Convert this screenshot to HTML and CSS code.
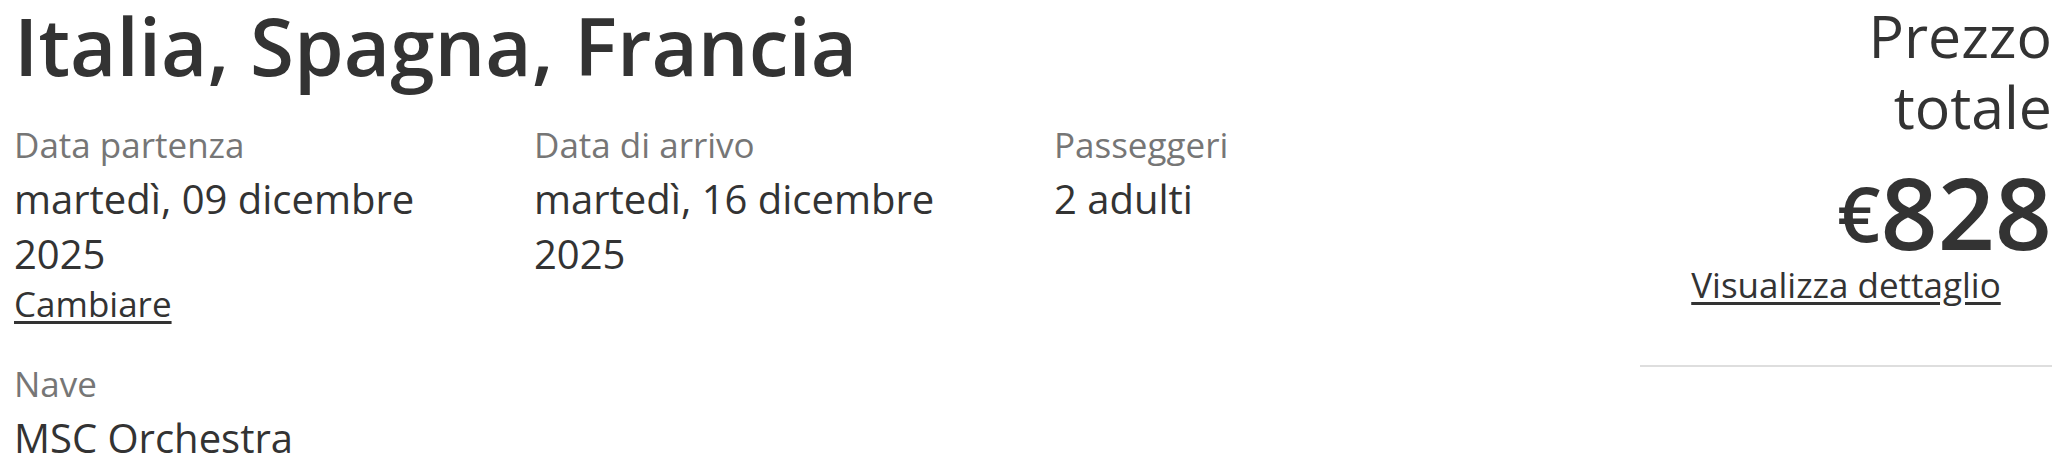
FILE: index.html
```html
<!DOCTYPE html>
<html lang="it">
  <head>
    <meta charset="UTF-8" />
    <meta name="viewport" content="width=device-width, initial-scale=1.0" />
    <title>Riepilogo crociera</title>
    <link rel="stylesheet" href="styles.css">
  </head>
  <body>
    <!-- =========== summary ========= -->
    <div class="cruise-summary">
      <div class="cruise-info">
        <h1>Italia, Spagna, Francia</h1>

        <div class="cruise-details">
          <div class="detail">
            <span class="detail-label">Data partenza</span>
            <span class="detail-value">martedì, 09 dicembre 2025</span>
            <a class="detail-link" href="#">Cambiare</a>
          </div>
          <div class="detail">
            <span class="detail-label">Data di arrivo</span>
            <span class="detail-value">martedì, 16 dicembre 2025</span>
          </div>
          <div class="detail">
            <span class="detail-label">Passeggeri</span>
            <span class="detail-value">2 adulti</span>
          </div>
          <div class="detail">
            <span class="detail-label">Nave</span>
            <span class="detail-value">MSC Orchestra</span>
          </div>
        </div>
      </div>

      <!-- price box -->
      <aside class="price-box">
        <div class="price-title">Prezzo totale</div>
        <div class="price-amount"><span class="currency">€</span>828</div>
        <a class="price-link" href="#">Visualizza dettaglio</a>
        <hr class="price-divider" />
      </aside>
    </div>
  </body>
</html>
```

FILE: styles.css
```css
* {
  margin: 0;
  padding: 0;
  box-sizing: border-box;
}

body {
  background-color: #fff;
  color: #333;
  font-family: "Open Sans", "Liberation Sans", sans-serif;
}

.cruise-summary {
  display: flex;
  gap: 66px;
  padding: 0 14px;
}

.cruise-info {
  flex: 1;
}

h1 {
  font-size: 80px;
  font-weight: 600;
  line-height: 90px;
}

.cruise-details {
  display: grid;
  grid-template-columns: repeat(3, 520px);
  row-gap: 31px;
  margin-top: 29px;
}

.detail {
  display: flex;
  flex-direction: column;
  align-items: flex-start;
}

.detail-label {
  color: #767676;
  font-size: 35px;
  line-height: 52px;
}

.detail-value {
  font-size: 40px;
  line-height: 55px;
  width: 420px;
}

.detail-link,
.price-link {
  color: #333;
  font-size: 35px;
  line-height: 46px;
  text-decoration: underline;
  text-underline-offset: 4px;
}

/* ============== price ========================== */
.price-box {
  width: 412px;
  text-align: right;
}

.price-title {
  font-size: 59px;
  line-height: 71px;
  padding-left: 200px;
}

.price-amount {
  font-size: 100px;
  font-weight: 600;
  line-height: 92px;
  margin-top: 23px;
}

.currency {
  font-size: 76px;
  vertical-align: 8px;
}

.price-link {
  display: block;
  text-align: center;
  margin-top: 3px;
}

.price-divider {
  border: none;
  border-top: 2px solid #dedede;
  margin-top: 57px;
}
```
